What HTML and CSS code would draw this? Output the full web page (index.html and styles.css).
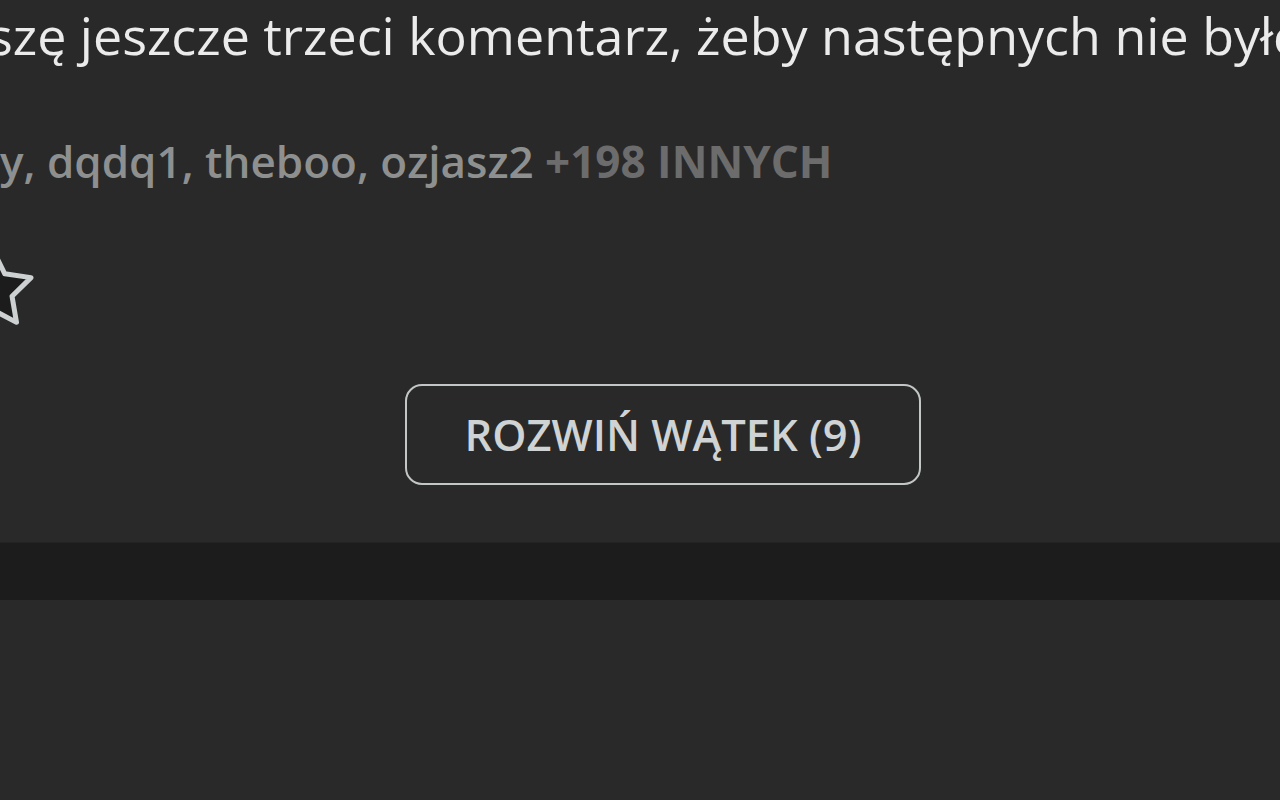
FILE: index.html
```html
<!DOCTYPE html>
<html lang="pl">
<head>
<meta charset="utf-8">
<title>Wpis</title>
<link rel="stylesheet" href="styles.css">
</head>
<body>
<div class="entry">
  <p class="entry-text">szę jeszcze trzeci komentarz, żeby następnych nie było</p>
  <p class="voters"><span class="voter-names">y, dqdq1, theboo, ozjasz2</span> <span class="voter-more">+198 INNYCH</span></p>
  <div class="actions">
    <svg class="fav-icon" viewBox="0 0 84 84" width="84" height="84" aria-hidden="true">
      <polygon points="42,4 53.76,27.82 80.04,31.64 61.02,50.18 65.51,76.36 42,64 18.49,76.36 22.98,50.18 3.96,31.64 30.24,27.82" fill="#1c1c1c" stroke="#cdd1d1" stroke-width="5" stroke-linejoin="round"/>
    </svg>
  </div>
  <div class="more-row">
    <button class="more-btn" type="button">ROZWIŃ WĄTEK (9)</button>
  </div>
</div>
<div class="separator"></div>
<div class="next"></div>
</body>
</html>
```

FILE: styles.css
```css
html, body {
  margin: 0;
  padding: 0;
  background: #292929;
  overflow: hidden;
}

body {
  font-family: "Open Sans", "Noto Sans", sans-serif;
  width: 1280px;
  height: 800px;
}

.entry {
  display: flex;
  flex-direction: column;
  height: 543px;
  border-bottom: 1px solid #232323;
  box-sizing: border-box;
}

.entry-text {
  margin: 3px 0 0 -12px;
  font-size: 52px;
  line-height: 64px;
  color: #ebebeb;
  white-space: nowrap;
}

.voters {
  margin: 68px 0 0 0;
  font-size: 44px;
  line-height: 52px;
  font-weight: 600;
  white-space: nowrap;
}

.voter-names {
  color: #8e9090;
}

.voter-more {
  color: #6c6c6c;
  font-weight: 700;
}

.actions {
  margin-top: 59px;
  height: 84px;
  display: flex;
}

.fav-icon {
  margin-left: -49px;
  display: block;
}

.more-row {
  margin-top: 54px;
  padding-left: 405px;
  display: flex;
}

.more-btn {
  width: 516px;
  height: 101px;
  border: 2px solid #c3c6c6;
  border-radius: 17px;
  background: transparent;
  color: #cfd3d3;
  font-family: "Open Sans", "Noto Sans", sans-serif;
  font-size: 43.5px;
  font-weight: 600;
  padding: 0;
  box-sizing: border-box;
}

.separator {
  height: 57px;
  background: #1c1c1c;
}

.next {
  height: 200px;
  background: #292929;
}
```
